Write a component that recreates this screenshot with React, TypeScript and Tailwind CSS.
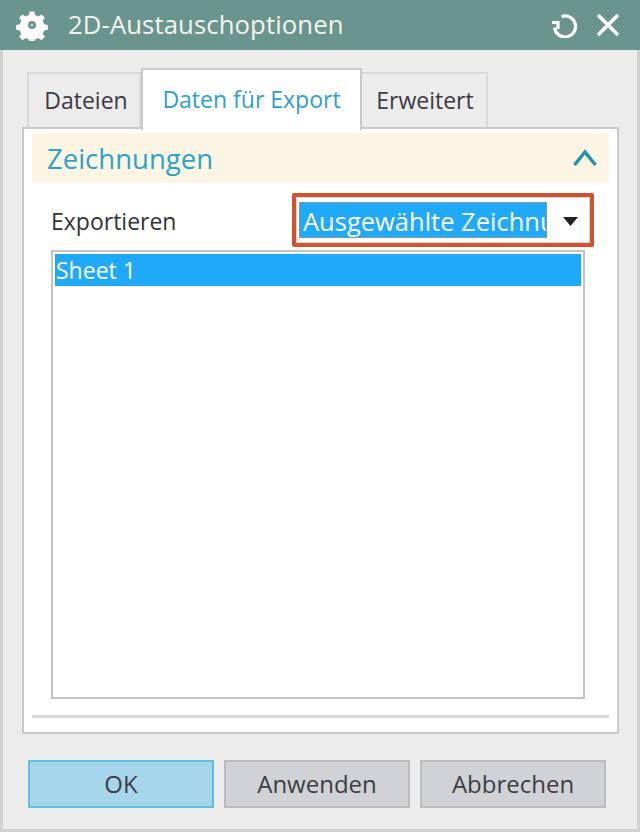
import React from "react";

function Gear() {
  return (
    <svg width="32" height="32" viewBox="0 0 32 32" className="shrink-0">
      <path
        fill="#ffffff"
        fillRule="evenodd"
        d="M13.6 2.5h4.8l.7 3.6 3.4 1.4 3-2.1 3.4 3.4-2.1 3 1.4 3.4 3.6.7v4.8l-3.6.7-1.4 3.4 2.1 3-3.4 3.4-3-2.1-3.4 1.4-.7 3.6h-4.8l-.7-3.6-3.4-1.4-3 2.1-3.4-3.4 2.1-3-1.4-3.4-3.6-.7v-4.8l3.6-.7 1.4-3.4-2.1-3 3.4-3.4 3 2.1 3.4-1.4z M16 12a4 4 0 1 0 0 8 4 4 0 0 0 0-8z"
      />
      <circle cx="16" cy="16" r="1.6" fill="#ffffff" opacity="0.55" />
    </svg>
  );
}

function Reset() {
  return (
    <svg width="28" height="26" viewBox="0 0 28 26" fill="none" stroke="#fff" strokeWidth="3.2">
      <path d="M10.5 4.6A10.5 10.5 0 1 1 3.6 15.5" />
      <path d="M1 10.5 L7 10.5 L7 17" />
    </svg>
  );
}

function Close() {
  return (
    <svg width="24" height="24" viewBox="0 0 24 24" stroke="#fff" strokeWidth="3.6" fill="none">
      <path d="M2 2 L22 22 M22 2 L2 22" />
    </svg>
  );
}

function Btn({ children, primary }: { children: React.ReactNode; primary?: boolean }) {
  return (
    <div
      className={
        primary
          ? "w-[186px] h-[48px] shrink-0 flex items-center justify-center border-[2px] border-[#62bfe2] bg-[#a5d6ec] text-[24px] text-[#3d3d44]"
          : "w-[186px] h-[48px] shrink-0 flex items-center justify-center border-[2px] border-[#bcbcbc] bg-[#d1d2d5] text-[24px] text-[#3d3d44]"
      }
    >
      {children}
    </div>
  );
}

export default function App() {
  return (
    <div className="w-[640px] h-[832px] flex flex-col overflow-hidden font-['Open_Sans','Noto_Sans',sans-serif] bg-[#ececec]">
      <div className="h-[50px] shrink-0 bg-[#6a958e] flex items-center pl-[16px] pr-[20px] text-white">
        <Gear />
        <span className="ml-[20px] text-[25.7px] tracking-[0.1px] text-[#f4f4ee]">2D-Austauschoptionen</span>
        <div className="ml-auto flex items-center gap-[17px]">
          <Reset />
          <Close />
        </div>
      </div>

      <div className="flex-1 flex flex-col border-x-[3px] border-b-[3px] border-[#d2d2d2] pl-[19px]">
        <div className="h-[78px] shrink-0 flex items-end pl-[5px] -mb-[1px] relative z-10">
          <div className="w-[114px] h-[55px] mb-[1px] pl-[4px] border-[2px] border-b-0 border-[#d9d9d9] flex items-center justify-center text-[23px] text-[#3d3a44]">
            Dateien
          </div>
          <div className="w-[221px] h-[62px] -mb-[2px] border-[2px] border-b-0 border-[#c9c9c9] bg-white flex items-start pt-[12px] justify-center text-[23px] text-[#2e9fcf]">
            Daten für Export
          </div>
          <div className="w-[126px] h-[55px] mb-[1px] pl-[2px] border-[2px] border-b-0 border-l-0 border-[#d9d9d9] flex items-center justify-center text-[23px] text-[#3d3a44]">
            Erweitert
          </div>
        </div>

        <div className="w-[597px] h-[607px] shrink-0 border-[2px] border-[#c9c9c9] bg-white px-[8px] pt-[4px] flex flex-col">
          <div className="h-[50px] shrink-0 bg-[#fdf5e3] flex items-center justify-between pl-[15px] pr-[12px]">
            <span className="text-[27.5px] text-[#2ba3cb] mt-[2px]">Zeichnungen</span>
            <svg width="24" height="18" viewBox="0 0 24 18" fill="none" stroke="#2194ad" strokeWidth="3.5">
              <path d="M1.5 16 L12 3 L22.5 16" />
            </svg>
          </div>

          <div className="h-[67px] shrink-0 flex items-start pl-[19px] pr-[15px] pt-[10px]">
            <span className="text-[23px] text-[#333338] mt-[11px]">Exportieren</span>
            <div className="ml-auto w-[302px] h-[54px] shrink-0 border-[4px] border-[#d2522f] rounded-[2px] bg-white">
              <div className="h-full border-[1px] border-[#d4d4d4] flex items-center pl-[2px] pr-[11px]">
                <div className="w-[248px] h-[36px] bg-[#1fa9fa] border border-dotted border-[#e08a40] overflow-hidden text-[25.5px] leading-[36px] text-white whitespace-nowrap pl-[3px]">
                  Ausgewählte Zeichnu
                </div>
                <svg className="ml-auto mt-[2px]" width="15" height="9" viewBox="0 0 15 9">
                  <path d="M0 0 H15 L7.5 9 Z" fill="#222" />
                </svg>
              </div>
            </div>
          </div>

          <div className="ml-[19px] w-[534px] h-[449px] shrink-0 border-[2px] border-[#c4c4c4] p-[2px]">
            <div className="h-[32px] bg-[#1fa9fa] text-white text-[23px] flex items-center pl-[1px]">Sheet 1</div>
          </div>

          <div className="mt-[16px] h-[3px] shrink-0 bg-[#d9d9d9]" />
        </div>

        <div className="mt-[26px] flex gap-[10px] ml-[6px]">
          <Btn primary>OK</Btn>
          <Btn>Anwenden</Btn>
          <Btn>Abbrechen</Btn>
        </div>
      </div>
    </div>
  );
}
